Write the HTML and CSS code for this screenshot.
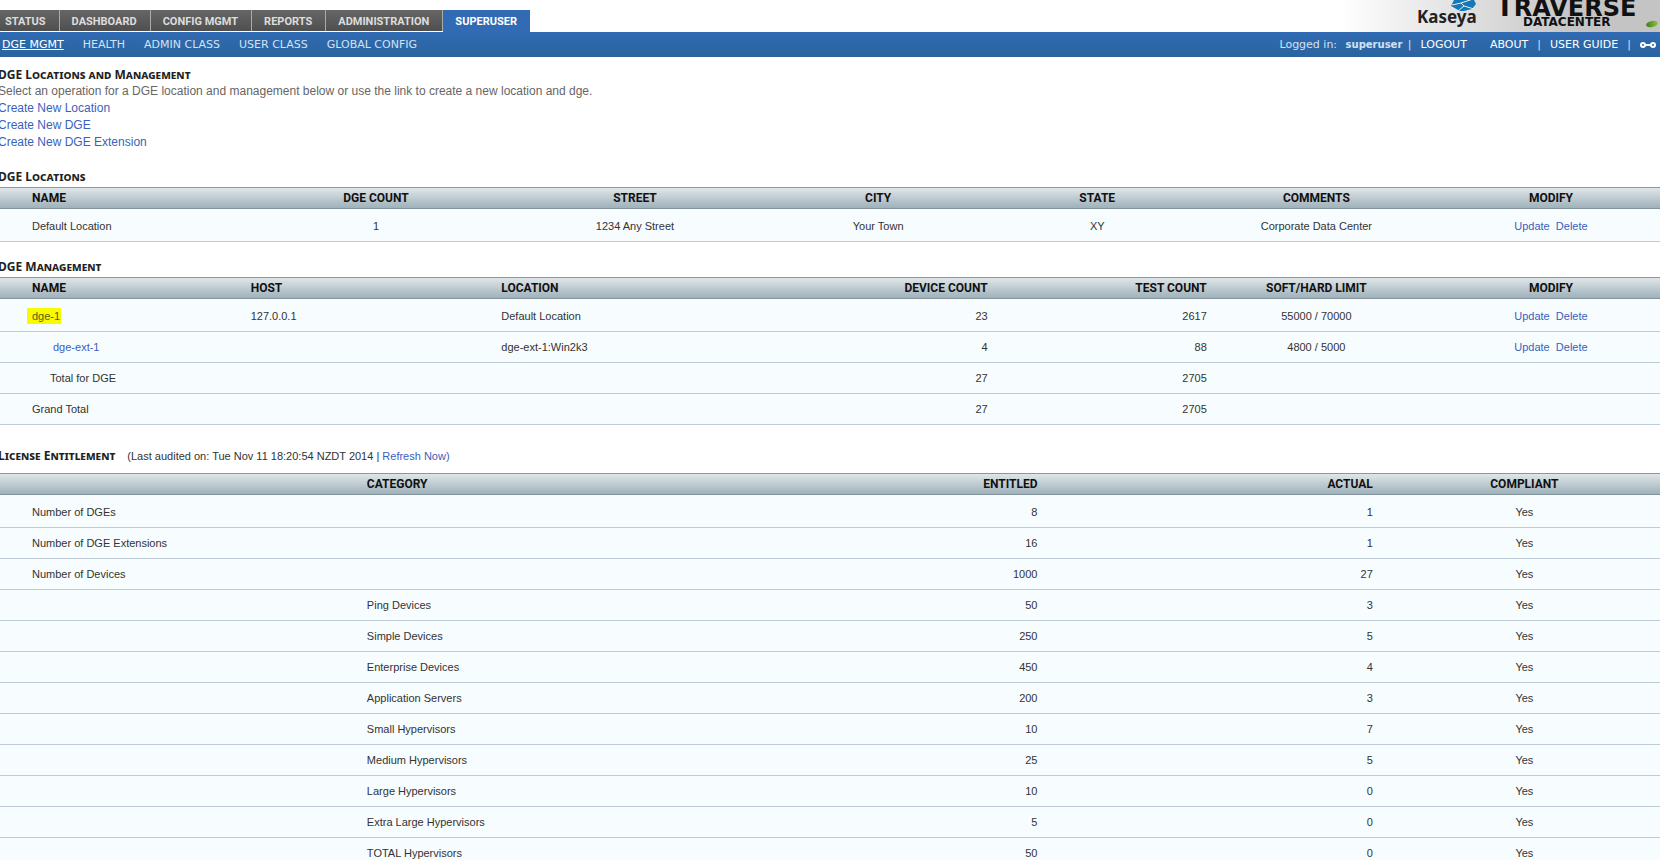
FILE: index.html
```html
<!DOCTYPE html>
<html lang="en">
<head>
    <meta charset="UTF-8">
    <meta name="viewport" content="width=device-width, initial-scale=1.0">
    <title>Traverse - DGE Management</title>
    <link rel="stylesheet" href="styles.css">
</head>
<body>
<header class="header">
    <nav class="tabs">
        <a href="#">STATUS</a>
        <a href="#">DASHBOARD</a>
        <a href="#">CONFIG MGMT</a>
        <a href="#">REPORTS</a>
        <a href="#">ADMINISTRATION</a>
        <a href="#" class="active">SUPERUSER</a>
    </nav>
    <div class="brand">
        <svg class="brand-logo" width="320" height="32" viewBox="0 0 320 32" role="img" aria-label="Kaseya Traverse Datacenter">
            <defs>
                <linearGradient id="leaf" x1="0" x2="1">
                    <stop offset="0" stop-color="#3f7d1c"/>
                    <stop offset="1" stop-color="#8cc63f"/>
                </linearGradient>
            </defs>
            <path fill="#1478b8" d="M114 0h20l2 4-4 5-8 2h-4l-9-5z"/>
            <path fill="none" stroke="#eee" stroke-width="1" d="M112 5l9-2 12-4M121 3l3 3 10 3M124 6l-6 5"/>
            <text class="logo-kaseya" x="77" y="23">Kaseya</text>
            <text class="logo-traverse" x="156" y="16"><tspan class="logo-cap">T</tspan>RAVERSE</text>
            <text class="logo-sub" x="183" y="26">DATACENTER</text>
            <ellipse cx="312" cy="24" rx="6" ry="3" fill="url(#leaf)" transform="rotate(-12 312 24)"/>
        </svg>
    </div>
</header>

<div class="subnav">
    <nav class="subnav-links">
        <a href="#" class="current">DGE MGMT</a>
        <a href="#">HEALTH</a>
        <a href="#">ADMIN CLASS</a>
        <a href="#">USER CLASS</a>
        <a href="#">GLOBAL CONFIG</a>
    </nav>
    <div class="account">
        <span class="who">Logged in: <b>superuser</b> |</span>
        <a href="#" class="logout">LOGOUT</a>
        <a href="#">ABOUT</a>
        <span>|</span>
        <a href="#">USER GUIDE</a>
        <span>|</span>
        <a href="#" class="link-icon" aria-label="Link">
            <svg width="16" height="8" viewBox="0 0 16 8" fill="none" stroke="#fff" stroke-width="2">
                <circle cx="3" cy="4" r="2"/>
                <circle cx="13" cy="4" r="2"/>
                <path d="M5 4h6"/>
            </svg>
        </a>
    </div>
</div>

<main>
    <section class="intro">
        <h1>DGE Locations and Management</h1>
        <p>Select an operation for a DGE location and management below or use the link to create a new location and dge.</p>
        <a href="#">Create New Location</a>
        <a href="#">Create New DGE</a>
        <a href="#">Create New DGE Extension</a>
    </section>

    <section class="block">
        <h2>DGE Locations</h2>
        <table class="grid dge">
            <colgroup><col><col><col><col><col><col><col></colgroup>
            <thead>
            <tr>
                <th class="first">NAME</th>
                <th class="mid">DGE COUNT</th>
                <th class="mid">STREET</th>
                <th class="mid">CITY</th>
                <th class="mid">STATE</th>
                <th class="mid">COMMENTS</th>
                <th class="last">MODIFY</th>
            </tr>
            </thead>
            <tbody>
            <tr>
                <td class="first">Default Location</td>
                <td class="mid">1</td>
                <td class="mid">1234 Any Street</td>
                <td class="mid">Your Town</td>
                <td class="mid">XY</td>
                <td class="mid">Corporate Data Center</td>
                <td class="last"><a href="#">Update</a>&nbsp; <a href="#">Delete</a></td>
            </tr>
            </tbody>
        </table>
    </section>

    <section class="block">
        <h2>DGE Management</h2>
        <table class="grid dge">
            <colgroup><col><col><col><col><col><col><col></colgroup>
            <thead>
            <tr>
                <th class="first">NAME</th>
                <th>HOST</th>
                <th>LOCATION</th>
                <th class="num">DEVICE COUNT</th>
                <th class="num">TEST COUNT</th>
                <th class="mid">SOFT/HARD LIMIT</th>
                <th class="last">MODIFY</th>
            </tr>
            </thead>
            <tbody>
            <tr>
                <td class="first"><a href="#" class="marked">dge-1</a></td>
                <td>127.0.0.1</td>
                <td>Default Location</td>
                <td class="num">23</td>
                <td class="num">2617</td>
                <td class="mid">55000 / 70000</td>
                <td class="last"><a href="#">Update</a>&nbsp; <a href="#">Delete</a></td>
            </tr>
            <tr>
                <td class="first child"><a href="#">dge-ext-1</a></td>
                <td></td>
                <td>dge-ext-1:Win2k3</td>
                <td class="num">4</td>
                <td class="num">88</td>
                <td class="mid">4800 / 5000</td>
                <td class="last"><a href="#">Update</a>&nbsp; <a href="#">Delete</a></td>
            </tr>
            <tr>
                <td class="first total">Total for DGE</td>
                <td></td>
                <td></td>
                <td class="num">27</td>
                <td class="num">2705</td>
                <td></td>
                <td></td>
            </tr>
            <tr>
                <td class="first">Grand Total</td>
                <td></td>
                <td></td>
                <td class="num">27</td>
                <td class="num">2705</td>
                <td></td>
                <td></td>
            </tr>
            </tbody>
        </table>
    </section>

    <section class="block license">
        <div class="license-title">
            <h2>License Entitlement</h2>
            <span>(Last audited on: Tue Nov 11 18:20:54 NZDT 2014 | <a href="#">Refresh Now)</a></span>
        </div>
        <table class="grid entitlement">
            <colgroup><col><col><col><col><col></colgroup>
            <thead>
            <tr>
                <th class="first"></th>
                <th>CATEGORY</th>
                <th class="num">ENTITLED</th>
                <th class="num">ACTUAL</th>
                <th class="last">COMPLIANT</th>
            </tr>
            </thead>
            <tbody>
            <tr><td class="first">Number of DGEs</td><td></td><td class="num">8</td><td class="num">1</td><td class="last">Yes</td></tr>
            <tr><td class="first">Number of DGE Extensions</td><td></td><td class="num">16</td><td class="num">1</td><td class="last">Yes</td></tr>
            <tr><td class="first">Number of Devices</td><td></td><td class="num">1000</td><td class="num">27</td><td class="last">Yes</td></tr>
            <tr><td></td><td>Ping Devices</td><td class="num">50</td><td class="num">3</td><td class="last">Yes</td></tr>
            <tr><td></td><td>Simple Devices</td><td class="num">250</td><td class="num">5</td><td class="last">Yes</td></tr>
            <tr><td></td><td>Enterprise Devices</td><td class="num">450</td><td class="num">4</td><td class="last">Yes</td></tr>
            <tr><td></td><td>Application Servers</td><td class="num">200</td><td class="num">3</td><td class="last">Yes</td></tr>
            <tr><td></td><td>Small Hypervisors</td><td class="num">10</td><td class="num">7</td><td class="last">Yes</td></tr>
            <tr><td></td><td>Medium Hypervisors</td><td class="num">25</td><td class="num">5</td><td class="last">Yes</td></tr>
            <tr><td></td><td>Large Hypervisors</td><td class="num">10</td><td class="num">0</td><td class="last">Yes</td></tr>
            <tr><td></td><td>Extra Large Hypervisors</td><td class="num">5</td><td class="num">0</td><td class="last">Yes</td></tr>
            <tr><td></td><td>TOTAL Hypervisors</td><td class="num">50</td><td class="num">0</td><td class="last">Yes</td></tr>
            </tbody>
        </table>
    </section>
</main>
</body>
</html>
```

FILE: styles.css
```css
:root {
    --link: #3a5fbc;
    --bar-top: #306bb4;
    --bar-bottom: #2b639f;
    --row: #f7fcff;
    --line: #bfcbd6;
}

body {
    margin: 0;
    background: #fff;
    color: #333;
    font-family: "Liberation Sans", Arial, sans-serif;
    font-size: 11px;
    overflow-x: hidden;
}

a {
    color: var(--link);
    text-decoration: none;
}

/* top tabs + logo */
.header {
    display: flex;
    justify-content: space-between;
    height: 32px;
}

.tabs {
    display: flex;
    align-items: flex-start;
    padding-top: 10px;
    margin-left: -7px;
}

.tabs a {
    height: 21px;
    line-height: 23px;
    padding: 0 13px 0 12px;
    border-right: 1px solid #aaa;
    background: linear-gradient(#666, #4f4f4f);
    color: #ddd;
    font-family: Roboto, Arial, sans-serif;
    font-weight: bold;
}

.tabs a.active {
    height: 22px;
    border-right: none;
    background: var(--bar-top);
    color: #fff;
}

.brand {
    width: 320px;
    background: linear-gradient(to right, #fff, #c4c4c4 75%);
}

.brand-logo {
    display: block;
}

.logo-kaseya {
    font: bold 17px "Noto Sans", sans-serif;
    fill: #222;
}

.logo-traverse {
    font: bold 24px "DejaVu Sans", sans-serif;
    fill: #111;
}

.logo-cap {
    font-size: 26px;
}

.logo-sub {
    font: bold 12px "DejaVu Sans", sans-serif;
    fill: #111;
}

/* blue bar */
.subnav {
    display: flex;
    justify-content: space-between;
    align-items: center;
    height: 25px;
    background: linear-gradient(var(--bar-top), var(--bar-bottom));
    font-family: "DejaVu Sans", Verdana, sans-serif;
    color: #d3e2f2;
}

.subnav-links {
    display: flex;
    gap: 19px;
    padding-left: 2px;
}

.subnav-links a {
    color: #d3e2f2;
}

.subnav-links a.current {
    color: #fff;
    text-decoration: underline;
}

.account {
    display: flex;
    align-items: center;
    gap: 9px;
    padding-right: 4px;
}

.account a {
    color: #fff;
}

.account b {
    margin: 0 2px 0 5px;
    font-size: 10px;
}

.account .logout {
    margin-right: 14px;
}

.link-icon svg {
    display: block;
}

/* headings */
h1,
h2 {
    margin: 0;
    font-family: "Noto Sans", Tahoma, sans-serif;
    font-size: 12px;
    line-height: 16px;
    font-variant: small-caps;
    color: #222;
}

.intro {
    display: flex;
    flex-direction: column;
    align-items: flex-start;
    margin-left: -2px;
    padding: 10px 0 1px;
    font-size: 12px;
    line-height: 17px;
}

.intro p {
    margin: 0;
    color: #666;
}

.block {
    padding-top: 17px;
}

.block h2 {
    margin-left: -2px;
    padding-bottom: 2px;
}

.license {
    padding-top: 23px;
}

.license-title {
    display: flex;
    align-items: center;
    gap: 12px;
    padding-bottom: 9px;
}

.license-title h2 {
    padding-bottom: 0;
}

/* data tables */
.grid {
    width: 100%;
    table-layout: fixed;
    border-collapse: separate;
    border-spacing: 0;
    line-height: 14px;
}

.grid th {
    height: 20px;
    padding: 0;
    border-top: 1px solid #8a97a0;
    border-bottom: 1px solid #84929b;
    background: linear-gradient(#dfe6e9, #9fb1ba);
    color: #111;
    font-family: Roboto, Arial, sans-serif;
    font-size: 12px;
    text-align: left;
}

.grid td {
    height: 30px;
    padding: 0;
    border-bottom: 1px solid var(--line);
    background: var(--row);
}

.grid tbody tr:first-child td {
    padding-top: 2px;
}

.grid .first {
    padding-left: 32px;
}

.grid .child {
    padding-left: 53px;
}

.grid .total {
    padding-left: 50px;
}

.grid .mid {
    text-align: center;
}

.grid .num {
    text-align: right;
}

.grid .last {
    padding-left: 16px;
    text-align: center;
}

.dge col:nth-child(1),
.dge col:nth-child(2) {
    width: 15.1%;
}

.dge col:nth-child(3) {
    width: 16.1%;
}

.dge col:nth-child(4),
.dge col:nth-child(5),
.dge col:nth-child(6) {
    width: 13.2%;
}

.entitlement col:nth-child(1) {
    width: 22.1%;
}

.entitlement col:nth-child(2),
.entitlement col:nth-child(3),
.entitlement col:nth-child(4) {
    width: 20.2%;
}

.marked {
    margin-left: -5px;
    padding: 2px 1px 2px 5px;
    background: #f8fb00;
    color: #55610f;
}
```
